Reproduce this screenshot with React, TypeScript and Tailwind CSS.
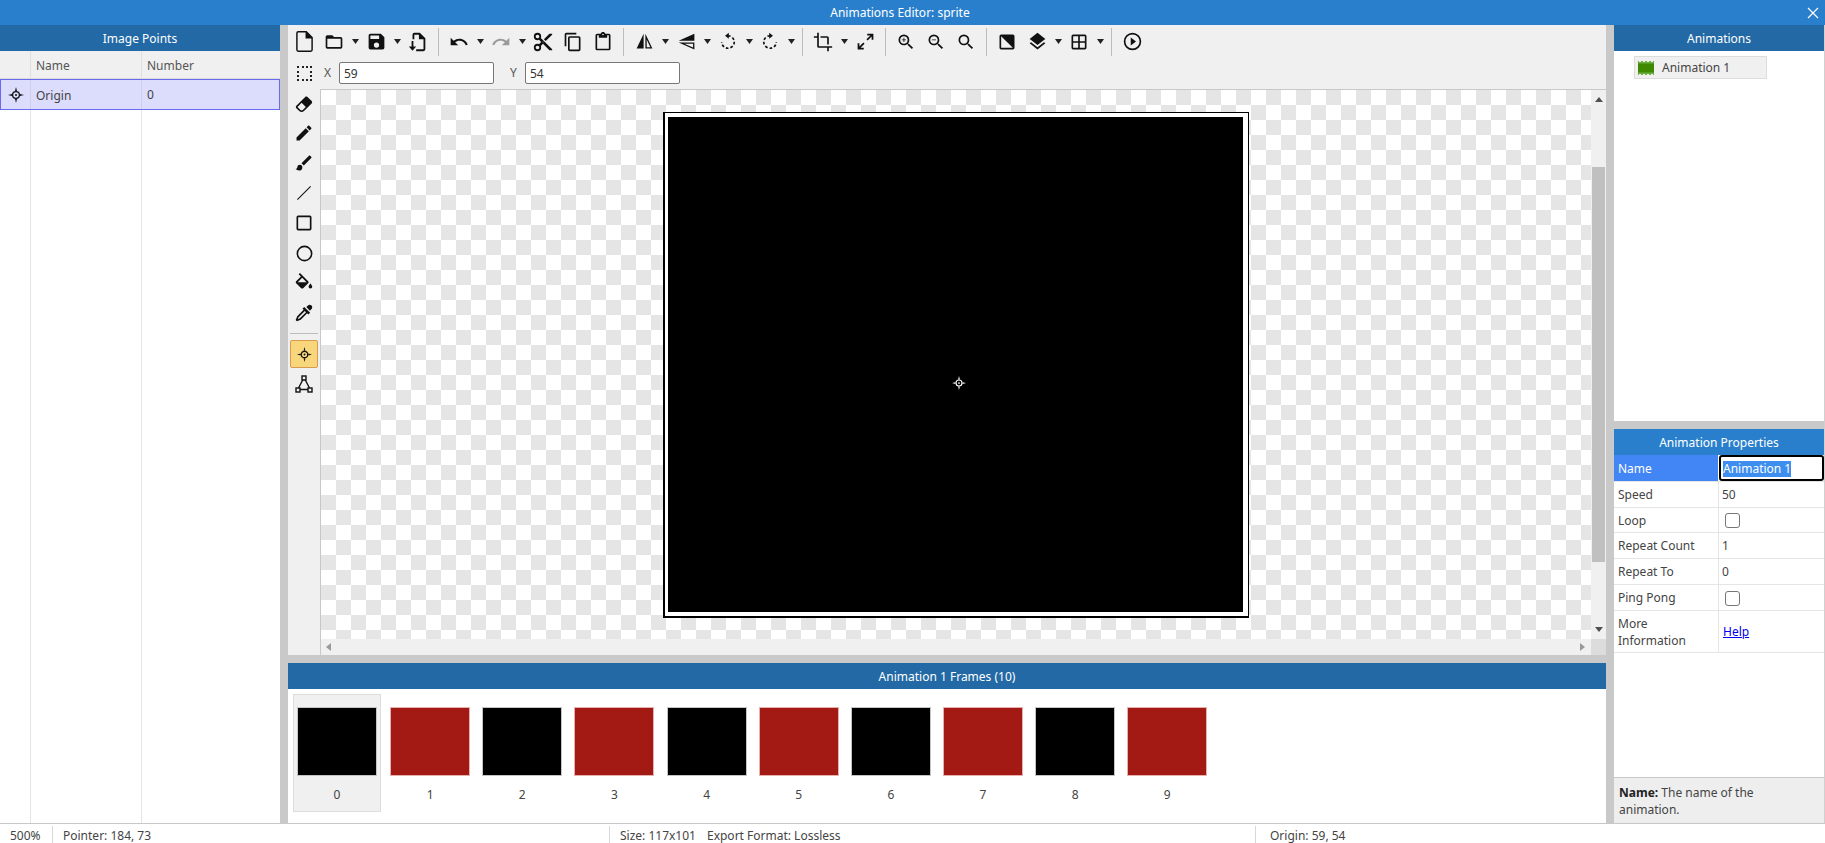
import React from 'react'

const P = {
  file: 'M14,2H6A2,2 0 0,0 4,4V20A2,2 0 0,0 6,22H18A2,2 0 0,0 20,20V8L14,2M18.6,20C18.6,20.3 18.3,20.6 18,20.6H6C5.7,20.6 5.4,20.3 5.4,20V4C5.4,3.7 5.7,3.4 6,3.4H13V9H18.6V20Z',
  folder: 'M20,18H4V8H20M20,6H12L10,4H4C2.89,4 2,4.89 2,6V18A2,2 0 0,0 4,20H20A2,2 0 0,0 22,18V8C22,6.89 21.1,6 20,6Z',
  save: 'M15,9H5V5H15M12,19A3,3 0 0,1 9,16A3,3 0 0,1 12,13A3,3 0 0,1 15,16A3,3 0 0,1 12,19M17,3H5C3.89,3 3,3.9 3,5V19A2,2 0 0,0 5,21H19A2,2 0 0,0 21,19V7L17,3Z',
  exportFile: 'M14,2H8A2,2 0 0,0 6,4V9H8V4H13V9H18V20H10V22H18A2,2 0 0,0 20,20V8L14,2M5,11V17H2L6,21.5L10,17H7V11H5Z',
  undo: 'M12.5,8C9.85,8 7.45,9 5.6,10.6L2,7V16H11L7.38,12.38C8.77,11.22 10.54,10.5 12.5,10.5C16.04,10.5 19.05,12.81 20.1,16L22.47,15.22C21.08,11.03 17.15,8 12.5,8Z',
  redo: 'M18.4,10.6C16.55,9 14.15,8 11.5,8C6.85,8 2.92,11.03 1.54,15.22L3.9,16C4.95,12.81 7.95,10.5 11.5,10.5C13.45,10.5 15.23,11.22 16.62,12.38L13,16H22V7L18.4,10.6Z',
  cut: 'M19,3L13,9L15,11L22,4V3M12,12.5A0.5,0.5 0 0,1 11.5,12A0.5,0.5 0 0,1 12,11.5A0.5,0.5 0 0,1 12.5,12A0.5,0.5 0 0,1 12,12.5M6,20A2,2 0 0,1 4,18C4,16.89 4.9,16 6,16A2,2 0 0,1 8,18C8,19.11 7.1,20 6,20M6,8A2,2 0 0,1 4,6C4,4.89 4.9,4 6,4A2,2 0 0,1 8,6C8,7.11 7.1,8 6,8M9.64,7.64C9.87,7.14 10,6.59 10,6A4,4 0 0,0 6,2A4,4 0 0,0 2,6A4,4 0 0,0 6,10C6.59,10 7.14,9.87 7.64,9.64L10,12L7.64,14.36C7.14,14.13 6.59,14 6,14A4,4 0 0,0 2,18A4,4 0 0,0 6,22A4,4 0 0,0 10,18C10,17.41 9.87,16.86 9.64,16.36L12,14L19,21H22V20L9.64,7.64Z',
  copy: 'M19,21H8V7H19M19,5H8A2,2 0 0,0 6,7V21A2,2 0 0,0 8,23H19A2,2 0 0,0 21,21V7A2,2 0 0,0 19,5M16,1H4A2,2 0 0,0 2,3V17H4V3H16V1Z',
  paste: 'M19,20H5V4H7V7H17V4H19M12,2A1,1 0 0,1 13,3A1,1 0 0,1 12,4A1,1 0 0,1 11,3A1,1 0 0,1 12,2M19,2H14.82C14.4,0.84 13.3,0 12,0C10.7,0 9.6,0.84 9.18,2H5A2,2 0 0,0 3,4V20A2,2 0 0,0 5,22H19A2,2 0 0,0 21,20V4A2,2 0 0,0 19,2Z',
  flipH: 'M3,20L11,3V20H3M13,3L21,20H13V3M14.5,9.6V18.5H18.7L14.5,9.6Z',
  flipV: 'M21,3V11H3L21,3M3,13H21V21L3,13M9.6,14.5L19.5,18.9V14.5H9.6Z',
  crop: 'M7,17V1H5V5H1V7H5V17A2,2 0 0,0 7,19H17V23H19V19H23V17M17,15H19V7C19,5.89 18.1,5 17,5H9V7H17V15Z',
  expand: 'M10,21V19H6.41L10.91,14.5L9.5,13.09L5,17.59V14H3V21H10M14.5,10.91L19,6.41V10H21V3H14V5H17.59L13.09,9.5L14.5,10.91Z',
  zoomIn: 'M15.5,14L20.5,19L19,20.5L14,15.5V14.71L13.73,14.43C12.59,15.41 11.11,16 9.5,16A6.5,6.5 0 0,1 3,9.5A6.5,6.5 0 0,1 9.5,3A6.5,6.5 0 0,1 16,9.5C16,11.11 15.41,12.59 14.43,13.73L14.71,14H15.5M9.5,14C12,14 14,12 14,9.5C14,7 12,5 9.5,5C7,5 5,7 5,9.5C5,12 7,14 9.5,14M12,10H10V12H9V10H7V9H9V7H10V9H12V10Z',
  zoomOut: 'M15.5,14H14.71L14.43,13.73C15.41,12.59 16,11.11 16,9.5A6.5,6.5 0 0,0 9.5,3A6.5,6.5 0 0,0 3,9.5A6.5,6.5 0 0,0 9.5,16C11.11,16 12.59,15.41 13.73,14.43L14,14.71V15.5L19,20.5L20.5,19L15.5,14M9.5,14C7,14 5,12 5,9.5C5,7 7,5 9.5,5C12,5 14,7 14,9.5C14,12 12,14 9.5,14M7,9H12V10H7V9Z',
  zoom: 'M9.5,3A6.5,6.5 0 0,1 16,9.5C16,11.11 15.41,12.59 14.43,13.73L14.71,14H15.5L20.5,19L19,20.5L14,15.5V14.71L13.73,14.43C12.59,15.41 11.11,16 9.5,16A6.5,6.5 0 0,1 3,9.5A6.5,6.5 0 0,1 9.5,3M9.5,5C7,5 5,7 5,9.5C5,12 7,14 9.5,14C12,14 14,12 14,9.5C14,7 12,5 9.5,5Z',
  contrast: 'M5,3H19A2,2 0 0,1 21,5V19A2,2 0 0,1 19,21H5A2,2 0 0,1 3,19V5A2,2 0 0,1 5,3M5,5V19H19L5,5Z',
  layers: 'M12,16L19.36,10.27L21,9L12,2L3,9L4.63,10.27M12,18.54L4.62,12.81L3,14.07L12,21.07L21,14.07L19.37,12.8L12,18.54Z',
  grid: 'M5,3H19A2,2 0 0,1 21,5V19A2,2 0 0,1 19,21H5A2,2 0 0,1 3,19V5A2,2 0 0,1 5,3M5,5V11H11V5H5M13,5V11H19V5H13M5,13V19H11V13H5M13,13V19H19V13H13Z',
  play: 'M10,16.5L16,12L10,7.5V16.5M12,20C7.59,20 4,16.41 4,12C4,7.59 7.59,4 12,4C16.41,4 20,7.59 20,12C20,16.41 16.41,20 12,20M12,2A10,10 0 0,0 2,12A10,10 0 0,0 12,22A10,10 0 0,0 22,12A10,10 0 0,0 12,2Z',
  eraser: 'M16.24,3.56L21.19,8.5C21.97,9.29 21.97,10.55 21.19,11.34L12,20.53C10.44,22.09 7.91,22.09 6.34,20.53L2.81,17C2.03,16.21 2.03,14.95 2.81,14.16L13.41,3.56C14.2,2.78 15.46,2.78 16.24,3.56M4.22,15.58L7.76,19.11C8.54,19.9 9.8,19.9 10.59,19.11L14.12,15.58L9.17,10.63L4.22,15.58Z',
  pencil: 'M20.71,7.04C21.1,6.65 21.1,6 20.71,5.63L18.37,3.29C18,2.9 17.35,2.9 16.96,3.29L15.12,5.12L18.87,8.87M3,17.25V21H6.75L17.81,9.93L14.06,6.18L3,17.25Z',
  brush: 'M20.71,4.63L19.37,3.29C19,2.9 18.35,2.9 17.96,3.29L9,12.25L11.75,15L20.71,6.04C21.1,5.65 21.1,5 20.71,4.63M7,14A3,3 0 0,0 4,17C4,18.31 2.84,19 2,19C2.92,20.22 4.5,21 6,21A4,4 0 0,0 10,17A3,3 0 0,0 7,14Z',
  line: 'M19.5,3.6L20.4,4.5L4.5,20.4L3.6,19.5L19.5,3.6Z',
  square: 'M5,3H19A2,2 0 0,1 21,5V19A2,2 0 0,1 19,21H5A2,2 0 0,1 3,19V5A2,2 0 0,1 5,3M5,5V19H19V5H5Z',
  circle: 'M12,20A8,8 0 0,1 4,12A8,8 0 0,1 12,4A8,8 0 0,1 20,12A8,8 0 0,1 12,20M12,2A10,10 0 0,0 2,12A10,10 0 0,0 12,22A10,10 0 0,0 22,12A10,10 0 0,0 12,2Z',
  fill: 'M19,11.5C19,11.5 17,13.67 17,15A2,2 0 0,0 19,17A2,2 0 0,0 21,15C21,13.67 19,11.5 19,11.5M5.21,10L10,5.21L14.79,10M16.56,8.94L7.62,0L6.21,1.41L8.59,3.79L3.44,8.94C2.85,9.5 2.85,10.47 3.44,11.06L8.94,16.56C9.23,16.85 9.62,17 10,17C10.38,17 10.77,16.85 11.06,16.56L16.56,11.06C17.15,10.47 17.15,9.5 16.56,8.94Z',
  dropper: 'M19.35,11.72L17.22,13.85L15.81,12.43L8.1,20.14L3.5,22L2,20.5L3.86,15.9L11.57,8.19L10.15,6.78L12.28,4.65L19.35,11.72M16.76,3C17.93,1.83 19.83,1.83 21,3C22.17,4.17 22.17,6.07 21,7.24L19.08,9.16L14.84,4.92L16.76,3M5.56,17.03L4.5,19.5L6.97,18.44L14.4,11L13,9.6L5.56,17.03Z',
}

const Icon = ({ d, size = 22, color = '#111' }: { d: string; size?: number; color?: string }) => (
  <svg width={size} height={size} viewBox="0 0 24 24" fill={color} fillRule="evenodd">
    <path d={d} />
  </svg>
)

const Rotate = ({ cw }: { cw?: boolean }) => (
  <svg width={20} height={20} viewBox="0 0 24 24" fill="none">
    <g transform={cw ? 'translate(24 0) scale(-1 1)' : undefined}>
      <path d="M12 4.5a7.5 7.5 0 1 1-7.5 7.5" stroke="#111" strokeWidth="2" strokeDasharray="3.2 2.4" />
      <path d="M8.5 4.5 13 1v7z" fill="#111" />
    </g>
  </svg>
)

const Origin = ({ color = '#111', size = 16 }: { color?: string; size?: number }) => (
  <svg width={size} height={size} viewBox="0 0 16 16" fill={color}>
    <circle cx="8" cy="8" r="3.4" fill="none" stroke={color} strokeWidth="1.3" />
    <circle cx="8" cy="8" r="1" />
    <path d="M8 0 9 4H7zM8 16 7 12H9zM0 8 4 7V9zM16 8 12 9V7z" />
  </svg>
)

const Polygon = () => (
  <svg width={18} height={18} viewBox="0 0 18 18" fill="none" stroke="#111" strokeWidth="1.4">
    <path d="M8 4.5 3.5 13M10 4.5 14.5 13M5 14.5h8" />
    <rect x="7" y="1" width="4" height="4" />
    <rect x="1" y="13" width="4" height="4" />
    <rect x="13" y="13" width="4" height="4" />
  </svg>
)

const Caret = () => (
  <span className="w-[12px] h-[30px] flex items-center justify-center">
    <svg width={7} height={5} viewBox="0 0 7 5" fill="#222"><path d="M0 0h7L3.5 5z" /></svg>
  </span>
)

const Tool = ({ children, caret }: { children: React.ReactNode; caret?: boolean }) => (
  <>
    <span className="w-[30px] h-[30px] flex items-center justify-center">{children}</span>
    {caret && <Caret />}
  </>
)

const Sep = () => <span className="w-px h-[28px] mx-[5px] bg-[#bdbdbd]" />

const Header = ({ title, dark = true }: { title: string; dark?: boolean }) => (
  <div className={`h-[26px] shrink-0 pt-[1px] flex items-center justify-center text-white text-[12px] ${dark ? 'bg-[#2269a5]' : 'bg-[#2a7fcd]'}`}>
    {title}
  </div>
)

const Side = ({ d, size = 20, h = 'h-[30px]' }: { d: string; size?: number; h?: string }) => (
  <div className={`${h} flex items-center justify-center`}>
    <Icon d={d} size={size} />
  </div>
)

const props = [
  { label: 'Speed', value: '50', h: 'h-[26px]' },
  { label: 'Loop', check: true, h: 'h-[25px]' },
  { label: 'Repeat Count', value: '1', h: 'h-[26px]' },
  { label: 'Repeat To', value: '0', h: 'h-[26px]' },
  { label: 'Ping Pong', check: true, h: 'h-[26px]' },
]

export default function App() {
  return (
    <div className="w-[1825px] h-[843px] flex flex-col overflow-hidden bg-white text-[12px] text-[#444] font-['Noto_Sans',sans-serif]">
      <div className="h-[25px] shrink-0 flex items-center bg-[#2a7fcd] text-white">
        <div className="flex-1 text-center">Animations Editor: sprite</div>
        <div className="w-[25px] flex items-center justify-center">
          <svg width={12} height={12} viewBox="0 0 12 12" stroke="#fff" strokeWidth="1.2"><path d="M1 1l10 10M11 1 1 11" /></svg>
        </div>
      </div>

      <div className="h-[798px] flex border-r border-[#d0d0d0]">
        {/* image points */}
        <div className="w-[280px] shrink-0 flex flex-col">
          <Header title="Image Points" />
          <div className="h-[28px] flex bg-[#f0f0f0] border-b border-[#dcdcdc] text-[#555]">
            <div className="w-[31px] border-r border-[#e0e0e0]" />
            <div className="w-[111px] border-r border-[#e0e0e0] pl-[5px] leading-[29px]">Name</div>
            <div className="flex-1 pl-[5px] leading-[29px]">Number</div>
          </div>
          <div className="h-[31px] flex items-center bg-[#dcdcfc] border border-[#6a6af0]">
            <div className="w-[30px] h-full border-r border-[#cfcfe8] flex items-center justify-center"><Origin /></div>
            <div className="w-[111px] h-full border-r border-[#cfcfe8] pl-[5px] leading-[31px]">Origin</div>
            <div className="flex-1 pl-[5px] leading-[31px]">0</div>
          </div>
          <div className="flex-1 flex">
            <div className="w-[31px] border-r border-[#e5e5e5]" />
            <div className="w-[111px] border-r border-[#e5e5e5]" />
          </div>
        </div>

        <div className="w-[8px] shrink-0 bg-[#c9c9c9]" />

        {/* editor */}
        <div className="w-[1318px] shrink-0 flex flex-col">
          <div className="h-[64px] shrink-0 bg-[#f0f0f0] flex flex-col">
            <div className="h-[33px] pl-[1px] flex items-center">
              <Tool><Icon d={P.file} size={25} /></Tool>
              <Tool caret><Icon d={P.folder} size={20} /></Tool>
              <Tool caret><Icon d={P.save} size={21} /></Tool>
              <Tool><Icon d={P.exportFile} size={22} /></Tool>
              <Sep />
              <Tool caret><Icon d={P.undo} size={20} /></Tool>
              <Tool caret><Icon d={P.redo} size={20} color="#9a9a9a" /></Tool>
              <Tool><Icon d={P.cut} size={22} /></Tool>
              <Tool><Icon d={P.copy} size={20} /></Tool>
              <Tool><Icon d={P.paste} size={20} /></Tool>
              <Sep />
              <Tool caret><Icon d={P.flipH} size={21} /></Tool>
              <Tool caret><Icon d={P.flipV} size={21} /></Tool>
              <Tool caret><Rotate /></Tool>
              <Tool caret><Rotate cw /></Tool>
              <Sep />
              <Tool caret><Icon d={P.crop} size={20} /></Tool>
              <Tool><Icon d={P.expand} size={21} /></Tool>
              <Sep />
              <Tool><Icon d={P.zoomIn} size={20} /></Tool>
              <Tool><Icon d={P.zoomOut} size={20} /></Tool>
              <Tool><Icon d={P.zoom} size={20} /></Tool>
              <Sep />
              <Tool><Icon d={P.contrast} size={20} /></Tool>
              <Tool caret><Icon d={P.layers} size={21} /></Tool>
              <Tool caret><Icon d={P.grid} size={20} /></Tool>
              <Sep />
              <Tool><Icon d={P.play} size={21} /></Tool>
            </div>
            <div className="h-[31px] flex items-start pt-[4px] text-[#555]">
              <div className="w-[32px] h-[22px] flex items-center justify-center">
                <span className="w-[15px] h-[15px] border-2 border-dotted border-[#222]" />
              </div>
              <span className="w-[19px] pl-[4px] leading-[22px]">X</span>
              <div className="w-[155px] h-[22px] bg-white border border-[#777] rounded-[2px] pl-[4px] leading-[21px] text-[#333]">59</div>
              <span className="w-[31px] pl-[16px] leading-[22px]">Y</span>
              <div className="w-[155px] h-[22px] bg-white border border-[#777] rounded-[2px] pl-[4px] leading-[21px] text-[#333]">54</div>
            </div>
          </div>

          <div className="h-[566px] shrink-0 flex">
            <div className="w-[33px] shrink-0 bg-[#f0f0f0] border-r border-[#c8c8c8] flex flex-col">
              <Side d={P.eraser} h="h-[29px]" /><Side d={P.pencil} /><Side d={P.brush} /><Side d={P.line} /><Side d={P.square} /><Side d={P.circle} size={19} />
              <div className="h-[30px] pt-[1px] flex items-center justify-center"><Icon d={P.fill} size={22} /></div>
              <Side d={P.dropper} />
              <div className="h-px bg-[#bdbdbd] mx-[2px] mt-[5px]" />
              <div className="h-[28px] mt-[6px] mx-[2px] bg-[#f8d77c] border border-[#d99a4c] rounded-[2px] flex items-center justify-center"><Origin size={15} /></div>
              <div className="h-[32px] flex items-center justify-center"><Polygon /></div>
            </div>
            <div className="flex-1 flex flex-col border-t border-[#c8c8c8]">
              <div className="h-[549px] flex">
                <div className="w-[1270px] pl-[342px] pt-[22px] bg-[repeating-conic-gradient(#e5e5e5_0%_25%,#fff_0%_50%)] bg-[length:30px_30px]">
                  <div className="w-[586px] h-[506px] border-t border-r border-l-2 border-b-2 border-black bg-white pl-[3px] pt-[4px]">
                    <div className="relative w-[575px] h-[495px] bg-black">
                      <div className="absolute left-[284px] top-[259px]"><Origin color="#fff" size={14} /></div>
                    </div>
                  </div>
                </div>
                <div className="w-[15px] bg-[#f0f0f0] flex flex-col items-center">
                  <div className="h-[77px] w-full pt-[7px] flex justify-center">
                    <svg width={8} height={5} viewBox="0 0 8 5" fill="#505050"><path d="M4 0l4 5H0z" /></svg>
                  </div>
                  <div className="h-[395px] w-[13px] bg-[#c0c0c0]" />
                  <div className="flex-1 w-full pt-[65px] flex justify-center">
                    <svg width={8} height={5} viewBox="0 0 8 5" fill="#505050"><path d="M4 5 8 0H0z" /></svg>
                  </div>
                </div>
              </div>
              <div className="h-[16px] flex items-center bg-[#f0f0f0]">
                <div className="w-[1270px] flex items-center justify-between pl-[5px] pr-[6px]">
                  <svg width={5} height={8} viewBox="0 0 5 8" fill="#999"><path d="M0 4l5-4v8z" /></svg>
                  <svg width={5} height={8} viewBox="0 0 5 8" fill="#999"><path d="M5 4 0 0v8z" /></svg>
                </div>
                <div className="w-[15px] h-full bg-[#dcdcdc]" />
              </div>
            </div>
          </div>

          <div className="h-[8px] shrink-0 bg-[#c9c9c9]" />
          <Header title="Animation 1 Frames (10)" />
          <div className="flex-1 flex gap-[4.15px] pl-[5px] pt-[5px]">
            {[0, 1, 2, 3, 4, 5, 6, 7, 8, 9].map((n) => (
              <div key={n} className={`w-[88px] h-[118px] flex flex-col items-center border ${n === 0 ? 'bg-[#f0f0f0] border-[#dddddd] mr-[1px]' : 'border-transparent'}`}>
                <div className={`w-[80px] h-[69px] mt-[12px] border ${n % 2 ? 'bg-[#a31a14] border-[#e6b0ae]' : 'bg-black border-[#c4c4c4]'}`} />
                <div className="mt-[10px] leading-[17px]">{n}</div>
              </div>
            ))}
          </div>
        </div>

        <div className="w-[8px] shrink-0 bg-[#c9c9c9]" />

        {/* animations + properties */}
        <div className="flex-1 flex flex-col">
          <div className="h-[396px] shrink-0 flex flex-col">
            <Header title="Animations" />
            <div className="mt-[5px] ml-[20px] w-[133px] h-[23px] bg-[#f0f0f0] border border-[#dddddd] flex items-center">
              <svg className="ml-[3px] mr-[8px]" width={16} height={14} viewBox="0 0 16 14">
                <rect width="16" height="14" fill="#70ad47" />
                <rect y="2.5" width="16" height="9" fill="#3f8a00" />
                <path d="M1 .5h2M5 .5h2M9 .5h2M13 .5h2M1 13.5h2M5 13.5h2M9 13.5h2M13 13.5h2" stroke="#e8f5d8" strokeWidth="1" />
              </svg>
              <span className="leading-[23px]">Animation 1</span>
            </div>
          </div>
          <div className="h-[8px] shrink-0 bg-[#c9c9c9]" />
          <div className="flex-1 flex flex-col">
            <Header title="Animation Properties" dark={false} />
            <div className="h-[27px] flex border-b border-[#e5e5e5]">
              <div className="w-[105px] bg-[#4285f4] text-white pl-[4px] leading-[28px] border-r border-white">Name</div>
              <div className="flex-1 border-2 border-black rounded-[3px] pl-[2px] pt-[1px] flex items-center">
                <span className="bg-[#3e8ef0] text-white leading-[16px]">Animation 1</span>
              </div>
            </div>
            {props.map((p) => (
              <div key={p.label} className={`${p.h} flex border-b border-[#e5e5e5]`}>
                <div className="w-[105px] pl-[4px] pt-[1px] border-r border-[#e5e5e5] flex items-center">{p.label}</div>
                <div className="flex-1 pl-[3px] pt-[1px] flex items-center">
                  {p.check ? <span className="ml-[3px] w-[15px] h-[15px] border border-[#767676] rounded-[3px] bg-white" /> : p.value}
                </div>
              </div>
            ))}
            <div className="h-[42px] flex border-b border-[#e5e5e5]">
              <div className="w-[105px] pl-[4px] pt-[1px] border-r border-[#e5e5e5] leading-[17px] flex items-center">More Information</div>
              <div className="flex-1 pl-[4px] pt-[1px] flex items-center text-[#0000ee] underline">Help</div>
            </div>
            <div className="flex-1" />
            <div className="h-[46px] shrink-0 bg-[#eeeeee] border-t border-[#c8c8c8] pl-[5px] pt-[6px] leading-[17px]">
              <div><b className="text-[#222]">Name:</b> The name of the</div>
              <div>animation.</div>
            </div>
          </div>
        </div>
      </div>

      <div className="h-[20px] shrink-0 flex items-end border-t border-[#c8c8c8] leading-[19px]">
        <div className="w-[53px] pl-[10px] h-[17px] border-r border-[#d8d8d8]">500%</div>
        <div className="w-[557px] pl-[10px] h-[17px] border-r border-[#d8d8d8]">Pointer: 184, 73</div>
        <div className="w-[646px] pl-[10px] h-[17px] border-r border-[#d8d8d8]">
          Size: 117x101<span className="ml-[11px]">Export Format: Lossless</span>
        </div>
        <div className="pl-[14px] h-[17px]">Origin: 59, 54</div>
      </div>
    </div>
  )
}
